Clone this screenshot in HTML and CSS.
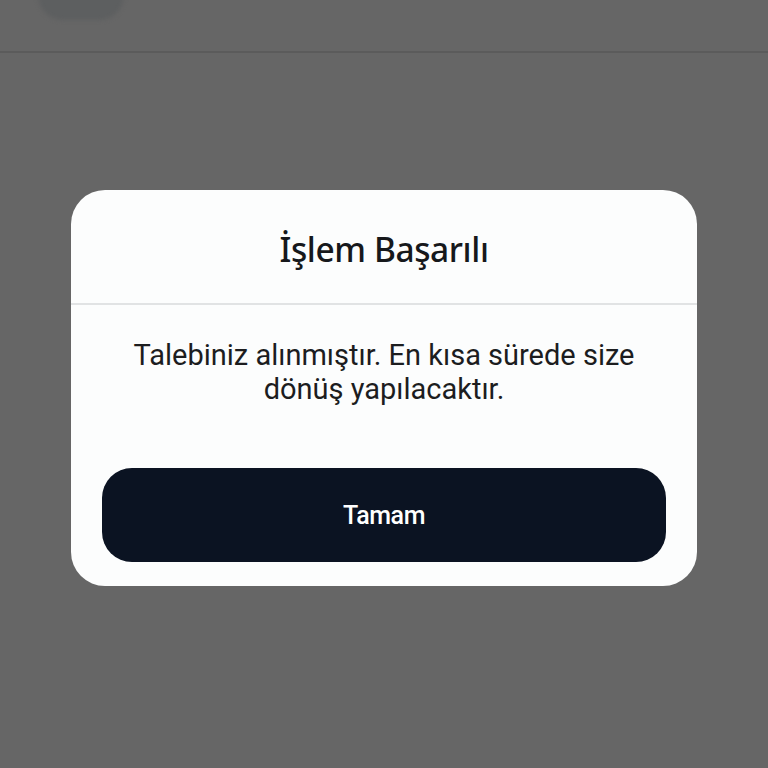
FILE: index.html
```html
<!DOCTYPE html>
<html lang="tr">

<head>
    <meta charset="UTF-8">
    <meta name="viewport" content="width=device-width, initial-scale=1.0">
    <title>İşlem Başarılı</title>
    <link rel="stylesheet" href="styles.css">
</head>

<body>
    <div class="ust_bar">
        <div class="ust_buton"></div>
    </div>

    <div class="perde">
        <div class="pencere">
            <div class="pencere_baslik">
                <h2>İşlem Başarılı</h2>
            </div>
            <div class="pencere_icerik">
                <p>Talebiniz alınmıştır. En kısa sürede size dönüş yapılacaktır.</p>
                <button type="button" class="tamam">Tamam</button>
            </div>
        </div>
    </div>
</body>

</html>
```

FILE: styles.css
```css
* {
    margin: 0;
    padding: 0;
    box-sizing: border-box;
}

body {
    width: 768px;
    height: 768px;
    background: #666666;
    font-family: Roboto, "Noto Sans", sans-serif;
    overflow: hidden;
}

.ust_bar {
    display: flow-root;
    height: 53px;
    border-bottom: 2px solid #5b5b5b;
    padding-left: 38px;
}

.ust_buton {
    width: 86px;
    height: 50px;
    margin-top: -30px;
    border-radius: 25px;
    background: #5d5f60;
    filter: blur(2px);
}

.perde {
    padding-top: 137px;
    display: flex;
    justify-content: center;
}

.pencere {
    width: 626px;
    background: #fcfdfd;
    border-radius: 34px;
    overflow: hidden;
}

.pencere_baslik {
    height: 115px;
    border-bottom: 2px solid #e1e3e4;
    display: flex;
    align-items: center;
    justify-content: center;
    padding-top: 4px;
}

.pencere_baslik h2 {
    font-family: "Noto Sans", sans-serif;
    font-weight: 500;
    font-size: 33.5px;
    color: #16181b;
    letter-spacing: -0.4px;
}

.pencere_icerik {
    padding: 33px 31px 24px;
    display: flex;
    flex-direction: column;
    align-items: center;
}

.pencere_icerik p {
    width: 530px;
    text-align: center;
    font-size: 29px;
    line-height: 34px;
    color: #1c1d1f;
}

.tamam {
    margin-top: 62px;
    width: 100%;
    height: 94px;
    border: none;
    border-radius: 30px;
    background: #0b1322;
    color: #ffffff;
    font-family: Roboto, sans-serif;
    font-weight: 500;
    font-size: 25px;
    letter-spacing: -0.4px;
}
```
